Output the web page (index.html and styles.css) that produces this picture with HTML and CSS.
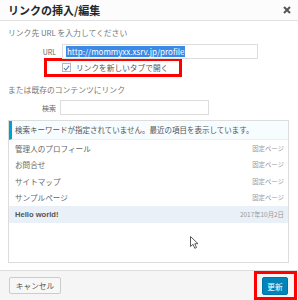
FILE: index.html
```html
<!DOCTYPE html>
<html lang="ja">
<head>
  <meta charset="UTF-8">
  <title>リンクの挿入/編集</title>
  <link rel="stylesheet" href="styles.css">
</head>
<body>
  <div class="dialog">
    <div class="head">
      <h1>リンクの挿入/編集</h1>
      <svg class="close" width="8" height="8" viewBox="0 0 8 8"><path d="M1 1L7 7M7 1L1 7" stroke="#555" stroke-width="2"/></svg>
    </div>

    <div class="body">
      <p class="hint">リンク先 URL を入力してください</p>
      <div class="field">
        <label class="lbl">URL</label>
        <div class="input url"><span class="sel">http://mommyxx.xsrv.jp/profile</span></div>
      </div>
      <div class="check-row">
        <span class="box">
          <svg width="8" height="8" viewBox="0 0 8 8"><path d="M1 4.2L3.2 6.3L7 1.5" fill="none" stroke="#4a7fb3" stroke-width="1.2"/></svg>
        </span>
        <span>リンクを新しいタブで開く</span>
      </div>

      <p class="hint or">または既存のコンテンツにリンク</p>
      <div class="field search">
        <label class="lbl">検索</label>
        <div class="input"></div>
      </div>

      <div class="results">
        <div class="notice">検索キーワードが指定されていません。最近の項目を表示しています。</div>
        <div class="row"><span>管理人のプロフィール</span><span class="meta">固定ページ</span></div>
        <div class="row"><span>お問合せ</span><span class="meta">固定ページ</span></div>
        <div class="row"><span>サイトマップ</span><span class="meta">固定ページ</span></div>
        <div class="row"><span>サンプルページ</span><span class="meta">固定ページ</span></div>
        <div class="row active"><span class="post">Hello world!</span><span class="meta">2017年10月2日</span></div>
      </div>
    </div>

    <div class="foot">
      <button class="btn cancel">キャンセル</button>
      <span class="mark">
        <button class="btn primary">更新</button>
      </span>
    </div>

    <svg class="cursor" width="9" height="13" viewBox="0 0 9 13"><path d="M0.5 0.5L0.5 10.5L3 8.3L4.8 12.3L6.5 11.5L4.8 7.7L8 7.7Z" fill="#fff" stroke="#333" stroke-width="0.8"/></svg>
  </div>
</body>
</html>
```

FILE: styles.css
```css
body {
  margin: 0;
  background: #fff;
  font-family: "Noto Sans CJK JP", "Noto Sans", sans-serif;
  color: #555;
}

.dialog {
  position: relative;
  width: 298px;
  height: 300px;
  overflow: hidden;
}

.head {
  height: 21px;
  border-bottom: 1px solid #e1e1e1;
  background: #fcfcfc;
  display: flex;
  align-items: center;
  justify-content: space-between;
  padding: 0 7px 0 8px;
  box-sizing: border-box;
}

.head h1 {
  margin: 0;
  font-size: 11px;
  font-weight: bold;
  color: #23282d;
  line-height: 14px;
}

.body {
  padding: 0 9px 0 8px;
}

.hint {
  margin: 7px 0 0;
  font-size: 7.8px;
  line-height: 10px;
  color: #777;
}

.hint.or {
  margin-top: 8px;
}

.field {
  display: flex;
  align-items: center;
  margin-top: 6px;
}

.lbl {
  width: 48px;
  text-align: right;
  font-size: 7px;
  color: #666;
  margin-right: 6px;
}

.input {
  height: 15px;
  box-sizing: border-box;
  border: 1px solid #ddd;
  background: #fff;
  display: flex;
  align-items: center;
  padding-left: 3px;
}

.input.url {
  width: 196px;
}

.sel {
  background: #3a8ae6;
  color: #fff;
  font-size: 8px;
  line-height: 11px;
  padding: 0 1px;
}

.search {
  margin-top: 5px;
}

.search .lbl {
  width: 48px;
  margin-right: 4px;
}

.search .input {
  width: 149px;
  height: 15px;
}

.check-row {
  width: 138px;
  height: 19px;
  box-sizing: border-box;
  margin: -1px 0 0 36px;
  border: 3px solid #f00;
  display: flex;
  align-items: center;
  padding-left: 15px;
  font-size: 7.7px;
  color: #555;
}

.box {
  width: 9px;
  height: 9px;
  box-sizing: border-box;
  border: 1px solid #b4b9be;
  margin-right: 5px;
  display: flex;
  align-items: center;
  justify-content: center;
}

.results {
  margin-top: 5px;
  height: 143px;
  box-sizing: border-box;
  border: 1px solid #ddd;
  width: 281px;
}

.notice {
  height: 19px;
  box-sizing: border-box;
  border-left: 3px solid #00a0d2;
  border-bottom: 1px solid #eee;
  background: #f7fcfe;
  font-size: 7.5px;
  line-height: 18px;
  padding-left: 3px;
  color: #555;
}

.row {
  height: 16.5px;
  display: flex;
  align-items: center;
  justify-content: space-between;
  padding: 0 4px 0 6px;
  font-size: 7.6px;
  color: #666;
}

.row.active {
  background: #e9f0f8;
}

.post {
  font-family: "Liberation Sans", sans-serif;
  font-weight: bold;
  color: #555;
}

.meta {
  font-size: 6.4px;
  color: #999;
}

.foot {
  position: absolute;
  left: 0;
  right: 0;
  bottom: 0;
  height: 30px;
  box-sizing: border-box;
  border-top: 1px solid #ddd;
  background: #f5f5f5;
  display: flex;
  align-items: center;
  justify-content: space-between;
  padding: 0 1px 0 9px;
}

.btn {
  font-family: "Noto Sans CJK JP", sans-serif;
  font-size: 7.7px;
  border-radius: 2px;
  padding: 0;
  margin: 0;
}

.cancel {
  width: 52px;
  height: 17px;
  background: #f7f7f7;
  border: 1px solid #ccc;
  color: #555;
}

.mark {
  border: 3px solid #f00;
  padding: 3px 6px 2px 5px;
  display: flex;
}

.primary {
  width: 26px;
  height: 18px;
  background: #0085ba;
  border: 1px solid #0073aa;
  color: #fff;
}

.cursor {
  position: absolute;
  left: 190px;
  top: 236px;
}
```
